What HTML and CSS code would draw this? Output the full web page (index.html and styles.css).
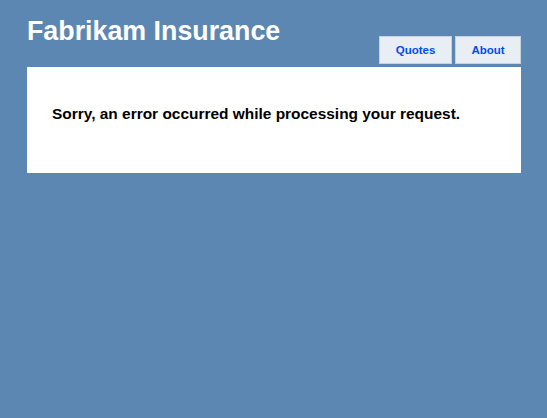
FILE: index.html
```html
<!DOCTYPE html>
<html lang="en">
<head>
<meta charset="utf-8">
<title>Error - Fabrikam Insurance</title>
<link rel="stylesheet" href="styles.css">
</head>
<body>
<div class="page">
  <div class="header">
    <h1 class="title">Fabrikam Insurance</h1>
    <nav class="menu">
      <a class="tab tab-quotes" href="#">Quotes</a>
      <a class="tab tab-about" href="#">About</a>
    </nav>
  </div>
  <div class="main">
    <h2 class="error">Sorry, an error occurred while processing your request.</h2>
  </div>
</div>
</body>
</html>
```
FILE: styles.css
```css
html, body {
  margin: 0;
  padding: 0;
}
body {
  background: #5c87b2;
  font-family: "Liberation Sans", Arial, sans-serif;
  width: 547px;
  height: 418px;
  overflow: hidden;
}
.page {
  width: 494px;
  padding: 16px 0 0 27px;
}
.header {
  display: flex;
  justify-content: space-between;
  align-items: flex-end;
  height: 48px;
  margin-bottom: 3px;
}
.title {
  align-self: flex-start;
  margin: 0;
  color: #fff;
  font-size: 26.8px;
  line-height: 30px;
  font-weight: bold;
}
.menu {
  display: flex;
  gap: 3px;
}
.tab {
  display: flex;
  align-items: center;
  justify-content: center;
  box-sizing: border-box;
  height: 28px;
  background: #e8eef4;
  border: 1px solid #c5d3e1;
  color: #034af3;
  font-size: 11.5px;
  font-weight: bold;
  text-decoration: none;
}
.tab-quotes {
  width: 73px;
}
.tab-about {
  width: 66px;
}
.main {
  background: #fff;
  height: 106px;
  box-sizing: border-box;
  padding: 38px 25px 0 25px;
}
.error {
  margin: 0;
  color: #000;
  font-size: 15.45px;
  line-height: 18px;
  font-weight: bold;
}
```
